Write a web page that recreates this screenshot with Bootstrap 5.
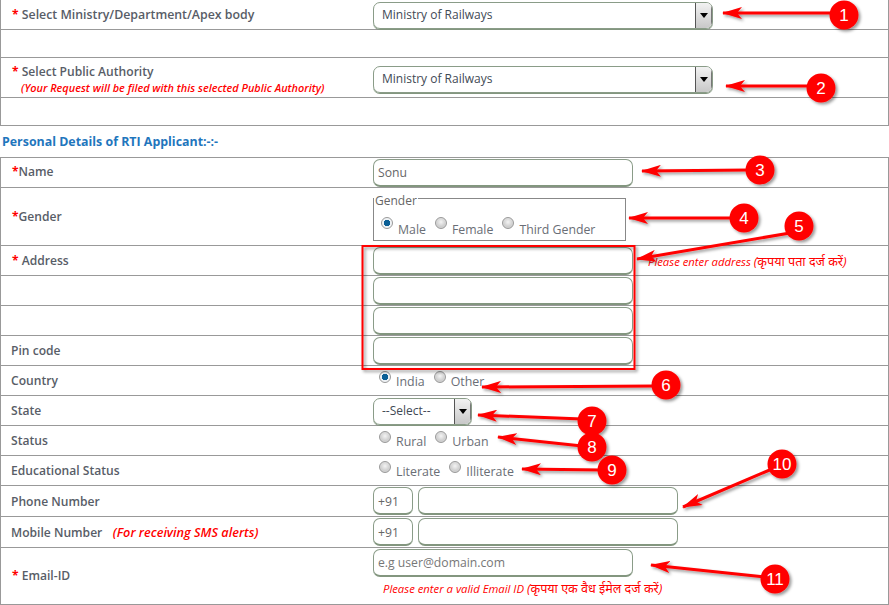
<!DOCTYPE html>
<html lang="en"><head><meta charset="utf-8"><title>RTI Request</title>
<link rel="stylesheet" href="https://cdn.jsdelivr.net/npm/bootstrap@5.3.0/dist/css/bootstrap.min.css">
<style>
html,body{margin:0;background:#fff;overflow:hidden}
body{font-family:"Open Sans","Noto Sans","Noto Sans Devanagari",sans-serif;font-size:12px;color:#5c6068;line-height:1.3}
.sheet{position:relative;width:889px;height:605px}
.tbl{border-left:1px solid #999;border-right:1px solid #999;width:889px}
.tbl.topline{border-top:1px solid #999}
.frow{border-bottom:1px solid #999;display:flex;align-items:center;box-sizing:border-box}
.h28{height:28px}.h30{height:30px}.h31{height:31px}.h40{height:40px}.h58{height:58px}.h57{height:57px}
.lbl{width:372px;padding-left:10px;flex:none;font-weight:600;color:#585d67;white-space:nowrap;font-size:12.1px}
.lbl-wide{font-size:12.35px;margin-top:1px}
.lbl-up{margin-top:-2px}
.lbl-dn{margin-top:2px}
.lbl-two{margin-top:4px}
.lbl-mob{margin-top:0}
.star{color:#f00;font-weight:700;font-size:12px;margin-left:1px}
.redi{color:#f00;font-style:italic;font-weight:600}
.mob{font-size:12.7px;margin-left:1px}
.sub{font-size:10.9px;padding-left:10px;margin-top:1px}
.val{flex:1;display:flex;align-items:center}
.sectionhead{height:31px;display:flex;align-items:center;padding:2px 0 0 2px;font-weight:700;color:#1f76bd;font-size:12.4px}
.fld{border:1px solid #8a9c88;border-bottom:2px solid #83967f;border-radius:7px;height:28px;background:#fff;font-family:inherit;font-size:12.2px;color:#666;padding:0 4px;box-sizing:border-box;outline:0}
.fld::placeholder{color:#777;opacity:1}
.w260{width:260px}.w40{width:40px;padding-top:2px}
.sel{display:flex;align-items:stretch;height:27px;border:1px solid #8a9c88;border-radius:7px;overflow:hidden;box-sizing:border-box;color:#3f4a55;box-shadow:0 1px 0 #83967f;margin-top:1px}
.sel-low{margin-top:3px}
.sel-w340{width:340px}.sel-w99{width:99px}
.sel-text{flex:1;padding-left:8px;display:flex;align-items:center;font-size:12px}
.sel-btn{width:17px;border-left:1px solid #555;background:linear-gradient(#f2f2f2,#c8c8c8);display:flex;align-items:center;justify-content:center;border-right:1px solid #777}
.sel-btn::after{content:"";border:4px solid transparent;border-top:5px solid #000;border-bottom:0}
.rgroup{display:flex;padding-left:6px;height:28px;font-size:12.4px}
.ropt{display:flex;margin-right:9px;color:#6a6e76}
.ropt input{appearance:none;width:12px;height:12px;border-radius:50%;border:1px solid #999;background:radial-gradient(circle at 50% 40%,#f4f4f4,#b4b4b4);margin:4px 5px 0 0;flex:none;box-shadow:inset 0 0 1px #fff}
.ropt input:checked{background:radial-gradient(circle,#0b5f96 0 3px,#eef2f5 3.4px)}
.ropt label{margin-top:7px;line-height:15px}
.genderbox{border:1px solid #888;width:253px;height:43px;margin:5px 0 0 0;padding:0 0 0 7px;position:relative;box-sizing:border-box}
.genderbox legend{position:absolute;left:0;top:-6px;background:#fff;font-size:12px;line-height:15px;width:auto;padding:0 1px;margin:0;color:#666;float:none}
.genderbox .rgroup{padding-left:0;margin-top:16px;height:24px;font-size:12.3px}
.genderbox .ropt{margin-right:9px}
.genderbox .ropt input{margin-top:2px}
.genderbox .ropt label{margin-top:7px}
.hint{color:#f00;font-style:italic;font-size:11.3px;white-space:nowrap}
.hint-hi{font-size:12.6px}
.hint-addr{margin-left:15px;margin-top:3px}
.hint-mail{padding:4px 0 0 10px}
.stack{display:block;margin-top:-5px}
.gap5{margin-right:5px}
.overlay{position:absolute;left:0;top:0;pointer-events:none}
.num{font-family:"Liberation Sans",sans-serif;font-size:17px;fill:#fff;text-anchor:middle}
</style></head>
<body>
<div class="sheet">
 <div class="tbl">
  <div class="frow h30"><div class="lbl lbl-wide"><span class="star">*</span>&nbsp;Select Ministry/Department/Apex body</div><div class="val"><div class="sel sel-w340"><span class="sel-text">Ministry of Railways</span><span class="sel-btn"></span></div></div></div>
  <div class="frow h28"></div>
  <div class="frow h40"><div class="lbl lbl-two"><div><span class="star">*</span>&nbsp;Select Public Authority</div><div class="redi sub">(Your Request will be filed with this selected Public Authority)</div></div><div class="val"><div class="sel sel-w340 sel-low"><span class="sel-text">Ministry of Railways</span><span class="sel-btn"></span></div></div></div>
  <div class="frow h28"></div>
 </div>
 <div class="sectionhead">Personal Details of RTI Applicant:-:-</div>
 <div class="tbl topline">
  <div class="frow h30"><div class="lbl lbl-up"><span class="star">*</span>Name</div><div class="val"><input class="fld w260" value="Sonu" aria-label="Name"></div></div>
  <div class="frow h58"><div class="lbl"><span class="star">*</span>Gender</div><div class="val">
    <fieldset class="genderbox"><legend>Gender</legend><div class="rgroup">
     <div class="ropt"><input type="radio" name="g" id="g1" checked><label for="g1">Male</label></div>
     <div class="ropt"><input type="radio" name="g" id="g2"><label for="g2">Female</label></div>
     <div class="ropt"><input type="radio" name="g" id="g3"><label for="g3">Third Gender</label></div>
    </div></fieldset></div></div>
  <div class="frow h30"><div class="lbl"><span class="star">*</span>&nbsp;Address</div><div class="val"><input class="fld w260" aria-label="Address 1"><span class="hint hint-addr">Please enter address <span class="hint-hi">(कृपया पता दर्ज करें)</span></span></div></div>
  <div class="frow h30"><div class="lbl"></div><div class="val"><input class="fld w260" aria-label="Address 2"></div></div>
  <div class="frow h30"><div class="lbl"></div><div class="val"><input class="fld w260" aria-label="Address 3"></div></div>
  <div class="frow h30"><div class="lbl">Pin code</div><div class="val"><input class="fld w260" aria-label="Pin code"></div></div>
  <div class="frow h30"><div class="lbl">Country</div><div class="val"><div class="rgroup">
     <div class="ropt"><input type="radio" name="c" id="c1" checked><label for="c1">India</label></div>
     <div class="ropt"><input type="radio" name="c" id="c2"><label for="c2">Other</label></div></div></div></div>
  <div class="frow h30"><div class="lbl">State</div><div class="val"><div class="sel sel-w99"><span class="sel-text">--Select--</span><span class="sel-btn"></span></div></div></div>
  <div class="frow h30"><div class="lbl">Status</div><div class="val"><div class="rgroup">
     <div class="ropt"><input type="radio" name="s" id="s1"><label for="s1">Rural</label></div>
     <div class="ropt"><input type="radio" name="s" id="s2"><label for="s2">Urban</label></div></div></div></div>
  <div class="frow h30"><div class="lbl">Educational Status</div><div class="val"><div class="rgroup">
     <div class="ropt"><input type="radio" name="e" id="e1"><label for="e1">Literate</label></div>
     <div class="ropt"><input type="radio" name="e" id="e2"><label for="e2">Illiterate</label></div></div></div></div>
  <div class="frow h31"><div class="lbl lbl-dn">Phone Number</div><div class="val"><input class="fld w40 gap5" value="+91" aria-label="Phone code"><input class="fld w260" aria-label="Phone"></div></div>
  <div class="frow h31"><div class="lbl lbl-mob">Mobile Number &nbsp;&nbsp;<span class="redi mob">(For receiving SMS alerts)</span></div><div class="val"><input class="fld w40 gap5" value="+91" aria-label="Mobile code"><input class="fld w260" aria-label="Mobile"></div></div>
  <div class="frow h57"><div class="lbl"><span class="star">*</span>&nbsp;Email-ID</div><div class="val"><div class="stack"><input class="fld w260" placeholder="e.g user@domain.com" aria-label="Email"><div class="hint hint-mail">Please enter a valid Email ID <span class="hint-hi">(कृपया एक वैध ईमेल दर्ज करें)</span></div></div></div></div>
 </div>
 <svg class="overlay" width="889" height="605" viewBox="0 0 889 605" aria-hidden="true">
  <defs><filter id="sh" x="-20%" y="-40%" width="140%" height="180%"><feDropShadow dx="2" dy="2" stdDeviation="1.6" flood-color="#000" flood-opacity=".4"/></filter>
  <marker id="ah" viewBox="0 0 20 12" refX="1" refY="6" markerWidth="20" markerHeight="12" markerUnits="userSpaceOnUse" orient="auto"><path d="M0 6 20 0 15 6 20 12Z" fill="#f00"/></marker></defs>
  <rect x="362.5" y="246" width="272" height="123" fill="none" stroke="#f00" stroke-width="2" filter="url(#sh)"/>
  <g filter="url(#sh)" fill="#f00">
   <g stroke="#f00" stroke-width="3" fill="none">
    <line x1="723" y1="13" x2="835" y2="13" marker-start="url(#ah)"/>
    <line x1="726" y1="86" x2="812" y2="86" marker-start="url(#ah)"/>
    <line x1="642" y1="171" x2="750" y2="170" marker-start="url(#ah)"/>
    <line x1="629" y1="218" x2="735" y2="218" marker-start="url(#ah)"/>
    <line x1="637" y1="259" x2="790" y2="233" marker-start="url(#ah)"/>
    <line x1="482" y1="387" x2="656" y2="386" marker-start="url(#ah)"/>
    <line x1="478" y1="415" x2="582" y2="419" marker-start="url(#ah)"/>
    <line x1="498" y1="437" x2="582" y2="446" marker-start="url(#ah)"/>
    <line x1="522" y1="469" x2="602" y2="470" marker-start="url(#ah)"/>
    <line x1="683" y1="507" x2="772" y2="469" marker-start="url(#ah)"/>
    <line x1="651" y1="565" x2="765" y2="577" marker-start="url(#ah)"/>
   </g>
   <circle cx="844" cy="15" r="14.5"/><circle cx="821" cy="88" r="14.5"/><circle cx="760" cy="170" r="14.5"/><circle cx="744" cy="218" r="14.5"/><circle cx="799" cy="226" r="14.5"/><circle cx="666" cy="385" r="14.5"/><circle cx="592" cy="421" r="14.5"/><circle cx="592" cy="447" r="14.5"/><circle cx="612" cy="470" r="14.5"/><circle cx="782" cy="464" r="14.5"/><circle cx="775" cy="579" r="14.5"/>
  </g>
  <text class="num" x="844" y="21">1</text><text class="num" x="821" y="94">2</text><text class="num" x="760" y="176">3</text><text class="num" x="744" y="224">4</text><text class="num" x="799" y="232">5</text><text class="num" x="666" y="391">6</text><text class="num" x="592" y="427">7</text><text class="num" x="592" y="453">8</text><text class="num" x="612" y="476">9</text><text class="num" x="782" y="470">10</text><text class="num" x="775" y="585">11</text>
 </svg>
</div>
<script src="https://cdn.jsdelivr.net/npm/bootstrap@5.3.0/dist/js/bootstrap.bundle.min.js"></script>
</body></html>
